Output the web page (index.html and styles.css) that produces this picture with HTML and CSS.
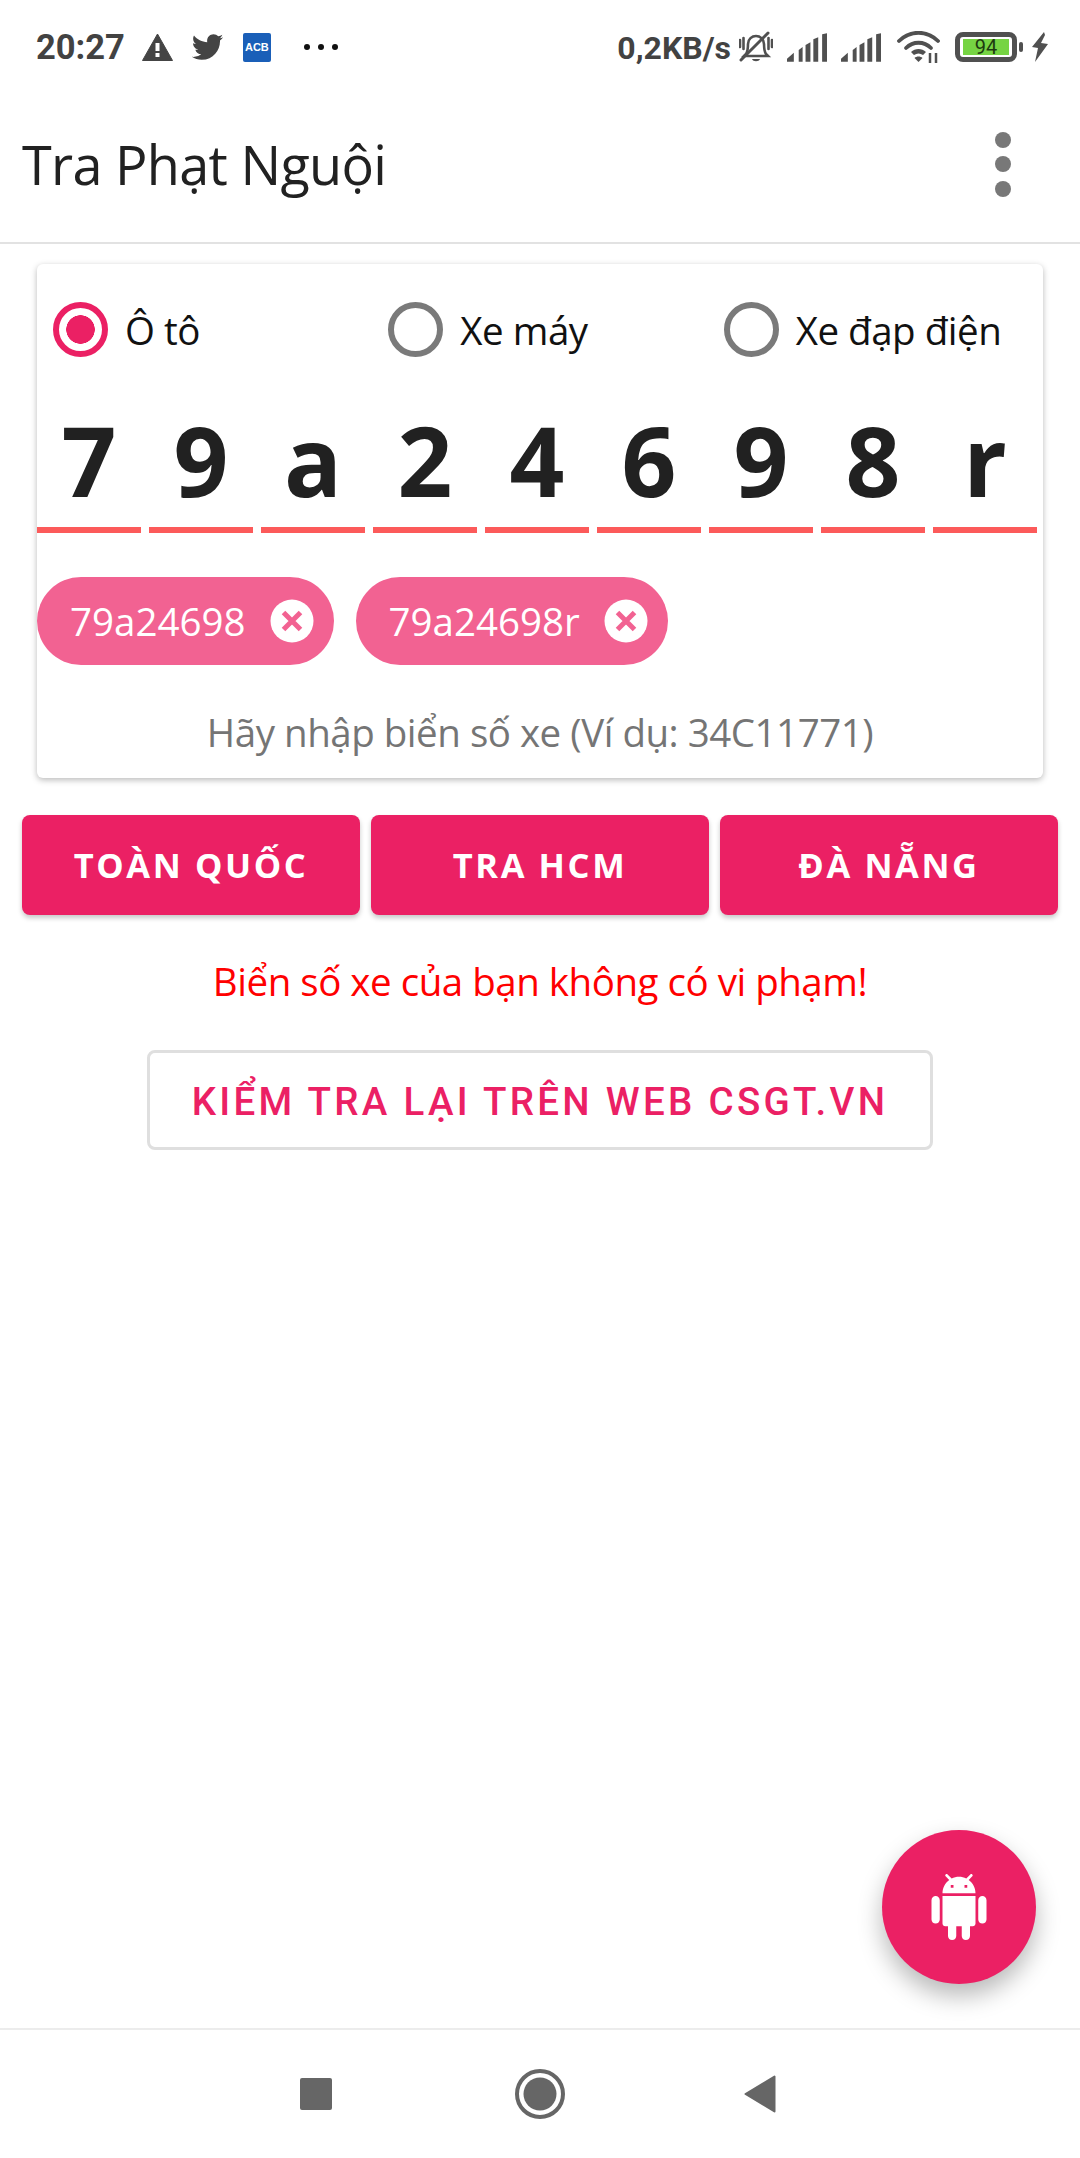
FILE: index.html
```html
<!DOCTYPE html>
<html lang="vi">
<head>
<meta charset="utf-8">
<title>Tra Phạt Nguội</title>
<link rel="stylesheet" href="styles.css">
</head>
<body>
<div class="phone">
  <header class="status">
    <div class="status-left">
      <span class="time">20:27</span>
      <svg class="ic-warn" viewBox="0 0 31 28"><path d="M15.500 1 30.500 27.500H.5Z" fill="#444" stroke="#444" stroke-linejoin="round"/><rect x="13.500" y="10" width="4" height="8" fill="#fff"/><rect x="13.500" y="20" width="4" height="4" fill="#fff"/></svg>
      <svg class="ic-tw" viewBox="1 3.500 22 18"><path fill="#444" d="M22.460 6c-.77.35-1.600.58-2.460.67.88-.53 1.560-1.370 1.880-2.380-.83.5-1.750.85-2.720 1.050C18.370 4.500 17.260 4 16 4c-2.350 0-4.270 1.920-4.270 4.290 0 .34.04.67.11.98C8.280 9.090 5.110 7.380 3 4.790c-.37.63-.58 1.370-.58 2.150 0 1.490.75 2.810 1.910 3.560-.71 0-1.370-.2-1.950-.5v.03c0 2.080 1.480 3.820 3.440 4.210a4.220 4.220 0 0 1-1.930.07 4.280 4.280 0 0 0 4 2.980 8.521 8.521 0 0 1-5.330 1.840c-.34 0-.68-.02-1.020-.06C3.440 20.290 5.700 21 8.120 21 16 21 20.330 14.460 20.330 8.790c0-.19 0-.37-.01-.56.84-.6 1.560-1.360 2.140-2.230z"/></svg>
      <span class="acb">ACB</span>
      <span class="more"><i></i><i></i><i></i></span>
    </div>
    <div class="status-right">
      <span class="speed">0,2KB/s</span>
      <svg class="ic-bell" viewBox="0 0 34 32"><g fill="none" stroke="#505050" stroke-width="2.600" stroke-linecap="round"><path d="M7 23c2-3 2-6 2-10 0-5 4-8 8-8s8 3 8 8c0 4 0 7 2 10l2 2H5Z"/><path d="M1 9v7M4.500 7v11M33 9v7M29.500 7v11"/><path d="M2 29 29 2" stroke-width="3"/></g><path d="M13 28h8c-1 3-7 3-8 0Z" fill="#505050"/></svg>
      <svg class="ic-sig" viewBox="0 0 41 29"><path fill="#505050" d="M0 29v-3l7-6v9ZM12 29V17l4-3v15ZM19 29V12l5-3v20ZM27 29V6l5-2v25ZM36 29V1l5-1v29Z"/></svg>
      <svg class="ic-sig" viewBox="0 0 41 29"><path fill="#505050" d="M0 29v-3l7-6v9ZM12 29V17l4-3v15ZM19 29V12l5-3v20ZM27 29V6l5-2v25ZM36 29V1l5-1v29Z"/></svg>
      <svg class="ic-wifi" viewBox="0 0 43 33"><g fill="none" stroke="#505050" stroke-width="3.800" stroke-linecap="round"><path d="M2 10c11-11 28-11 39 0"/><path d="M9 17c7-7 18-7 25 0"/></g><path d="M14 21c4-4 11-4 15 0l-3 3c-3-2-6-2-9 0Z" fill="#505050"/><path d="M17.500 27c2-2 6-2 8 0l-4 4Z" fill="#505050"/><path d="M33 22v10M39 22v10" stroke="#505050" stroke-width="2.500"/></svg>
      <span class="battery"><span class="level">94</span></span>
      <span class="nub"></span>
      <svg class="ic-bolt" viewBox="0 0 18 30"><path fill="#505050" d="M13 0 1 15l6 1-3 14L17 12l-7-1 4-8Z"/></svg>
    </div>
  </header>

  <div class="appbar">
    <h1 class="title">Tra Phạt Nguội</h1>
    <div class="menu"><i></i><i></i><i></i></div>
  </div>

  <main class="content">
    <section class="card">
      <div class="radios">
        <label class="radio"><span class="dot on"></span>Ô tô</label>
        <label class="radio"><span class="dot"></span>Xe máy</label>
        <label class="radio"><span class="dot"></span>Xe đạp điện</label>
      </div>
      <div class="otp">
        <span class="cell">7</span><span class="cell">9</span><span class="cell">a</span>
        <span class="cell">2</span><span class="cell">4</span><span class="cell">6</span>
        <span class="cell">9</span><span class="cell">8</span><span class="cell">r</span>
      </div>
      <div class="chips">
        <span class="chip">79a24698<svg class="x" viewBox="0 0 44 44"><circle cx="22" cy="22" r="21.500" fill="#fff"/><path d="M13.500 13.500l17 17M30.500 13.500l-17 17" stroke="#f26292" stroke-width="5"/></svg></span>
        <span class="chip">79a24698r<svg class="x" viewBox="0 0 44 44"><circle cx="22" cy="22" r="21.500" fill="#fff"/><path d="M13.500 13.500l17 17M30.500 13.500l-17 17" stroke="#f26292" stroke-width="5"/></svg></span>
      </div>
      <p class="hint">Hãy nhập biển số xe (Ví dụ: 34C11771)</p>
    </section>

    <div class="actions">
      <button class="btn">TOÀN QUỐC</button>
      <button class="btn">TRA HCM</button>
      <button class="btn">ĐÀ NẴNG</button>
    </div>

    <p class="result">Biển số xe của bạn không có vi phạm!</p>

    <button class="outline">KIỂM TRA LẠI TRÊN WEB CSGT.VN</button>

    <button class="fab" aria-label="Android">
      <svg viewBox="0 0 24 24" class="droid"><path fill="#fff" d="M6 18c0 .55.45 1 1 1h1v3.500c0 .83.67 1.500 1.500 1.500s1.500-.67 1.500-1.500V19h2v3.500c0 .83.67 1.500 1.500 1.500s1.500-.67 1.500-1.500V19h1c.55 0 1-.45 1-1V8H6v10zM3.500 8C2.670 8 2 8.670 2 9.500v7c0 .83.67 1.500 1.500 1.500S5 17.330 5 16.500v-7C5 8.670 4.330 8 3.500 8zm17 0c-.83 0-1.500.67-1.500 1.500v7c0 .83.67 1.500 1.500 1.500s1.500-.67 1.500-1.500v-7c0-.83-.67-1.500-1.500-1.500zm-4.970-5.840l1.300-1.300c.2-.2.2-.51 0-.71-.2-.2-.51-.2-.71 0l-1.480 1.480C13.850 1.230 12.950 1 12 1c-.96 0-1.860.23-2.660.63L7.850.15c-.2-.2-.51-.2-.71 0-.2.2-.2.51 0 .71l1.310 1.310C6.970 3.260 6 5.010 6 7h12c0-1.990-.97-3.750-2.470-4.840zM10 5H9V4h1v1zm5 0h-1V4h1v1z"/></svg>
    </button>
  </main>

  <nav class="navbar">
    <span class="nav-square"></span>
    <svg class="nav-home" viewBox="0 0 50 50"><circle cx="25" cy="25" r="23" fill="none" stroke="#666" stroke-width="4"/><circle cx="25" cy="25" r="16.500" fill="#666"/></svg>
    <svg class="nav-back" viewBox="0 0 32 38"><path d="M30.500 1.500v35L1.500 19Z" fill="#666" stroke="#666" stroke-width="2" stroke-linejoin="round"/></svg>
  </nav>
</div>
</body>
</html>
```
FILE: styles.css
```css
* { box-sizing: border-box; }
html, body { margin: 0; padding: 0; background: #fff; }
body { font-family: "Open Sans", "Noto Sans", sans-serif; color: #212121; }
.phone { width: 1080px; height: 2158px; display: flex; flex-direction: column; overflow: hidden; }

/* status bar */
.status { height: 70px; padding: 31px 31px 0 36px; display: flex; justify-content: space-between; align-items: flex-start; flex: none; }
.status-left, .status-right { display: flex; align-items: center; height: 32px; }
.time, .speed { font-family: Roboto, sans-serif; font-weight: 700; line-height: 32px; color: #424242; }
.time { font-size: 34.500px; }
.speed { font-size: 32px; padding-top: 1px; }
.ic-warn { width: 31px; height: 28px; margin-left: 17px; }
.ic-tw { width: 33px; height: 28px; margin-left: 18px; }
.acb { width: 28px; height: 29px; margin-left: 19px; background: #1a5fb8; border-radius: 2px; color: #fff; font: 700 11px/29px "Liberation Sans", sans-serif; text-align: center; }
.more { display: flex; gap: 8px; margin-left: 33px; }
.more i { width: 6px; height: 6px; border-radius: 50%; background: #111; }
.ic-bell { width: 34px; height: 32px; margin-left: 8px; }
.ic-sig { width: 40px; height: 29px; margin-left: 14px; }
.ic-wifi { width: 43px; height: 33px; margin-left: 16px; }
.battery { width: 62px; height: 30px; margin-left: 15px; border: 5px solid #505050; border-radius: 8px; padding: 2px 3px; display: flex; }
.level { width: 46px; height: 16px; background: #76d443; color: #1d3a10; font-family: Roboto, sans-serif; font-size: 20px; line-height: 17px; text-align: center; }
.nub { width: 4px; height: 10px; margin-left: 2px; background: #505050; border-radius: 2px; }
.ic-bolt { width: 18px; height: 30px; margin-left: 8px; }

/* app bar */
.appbar { height: 174px; flex: none; border-bottom: 2px solid #e2e2e2; display: flex; align-items: center; justify-content: space-between; padding: 16px 69px 0 22px; }
.title { margin: 0; font-weight: 400; font-size: 54px; letter-spacing: -.7px; line-height: 70px; color: #212121; }
.menu { display: flex; flex-direction: column; gap: 8.500px; }
.menu i { width: 16px; height: 16px; border-radius: 50%; background: #787878; }

/* main */
.content { position: relative; flex: 1; display: flex; flex-direction: column; align-items: center; }
.card { width: 1006px; height: 514px; margin-top: 20px; background: #fff; border-radius: 6px; box-shadow: 0 2px 6px rgba(0,0,0,.28); display: flex; flex-direction: column; }
.radios { display: flex; margin-top: 38px; }
.radio { flex: 1; display: flex; align-items: center; padding-left: 16px; gap: 17px; font-size: 38.500px; letter-spacing: -.48px; line-height: 54px; color: #111; }
.dot { width: 55px; height: 55px; border-radius: 50%; border: 6px solid #7a7a7a; flex: none; }
.dot.on { border-color: #eb2064; background: radial-gradient(circle, #eb2064 0 14px, #fff 14.500px); }
.otp { display: flex; gap: 8px; margin-top: 52px; }
.cell { width: 104px; height: 124px; border-bottom: 6px solid #fc5a5a; text-align: center; font-weight: 700; font-size: 96px; line-height: 102px; color: #212121; }
.chips { display: flex; gap: 22px; margin-top: 44px; }
.chip { height: 88px; display: flex; align-items: center; padding: 0 20px 0 33px; border-radius: 44px; background: #f26292; color: #fff; font-size: 38.500px; }
.x { width: 44px; height: 44px; margin-left: 24px; }
.hint { margin: 41px 0 0; text-align: center; font-size: 38.500px; letter-spacing: -.48px; line-height: 52px; color: #757575; }

.actions { display: flex; gap: 11px; margin-top: 37px; }
.btn { width: 338px; height: 100px; border: 0; border-radius: 8px; background: #eb2064; color: #fff; font-family: "Open Sans", sans-serif; font-weight: 700; font-size: 34.500px; letter-spacing: 2.600px; box-shadow: 0 3px 5px rgba(0,0,0,.22); padding: 0 0 2px; }
.result { margin: 39px 0 0; color: #f00; font-size: 38.500px; letter-spacing: -.48px; line-height: 54px; text-align: center; }
.outline { width: 786px; height: 100px; margin-top: 42px; border: 3px solid #dfdfdf; border-radius: 8px; background: #fff; color: #eb2064; font-family: Roboto, sans-serif; font-weight: 500; font-size: 38.500px; letter-spacing: 3.300px; padding: 2px 0 0; }

.fab { position: absolute; right: 44px; top: 1586px; width: 154px; height: 154px; border: 0; border-radius: 50%; background: #eb2064; padding: 0; display: flex; align-items: center; justify-content: center; box-shadow: 0 12px 24px rgba(0,0,0,.28); }
.droid { width: 66px; height: 66px; }

/* nav bar */
.navbar { height: 130px; flex: none; border-top: 2px solid #ececec; display: flex; align-items: center; position: relative; padding: 0 0 0 300px; }
.nav-square { width: 32px; height: 32px; background: #666; border-radius: 2px; }
.nav-home { width: 50px; height: 50px; margin-left: 183px; }
.nav-back { width: 32px; height: 38px; margin-left: 179px; }
```
